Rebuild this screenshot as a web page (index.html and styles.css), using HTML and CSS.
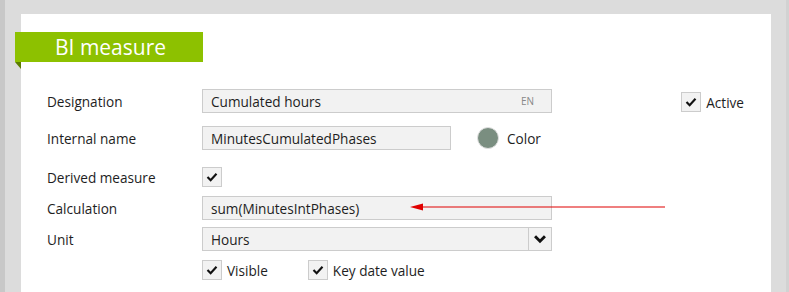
FILE: index.html
```html
<!DOCTYPE html>
<html lang="en">
<head>
    <meta charset="UTF-8">
    <title>BI measure</title>
    <link rel="stylesheet" href="styles.css">
</head>
<body>
    <main class="panel">
        <h1 class="banner">BI measure</h1>

        <form class="form">
            <div class="row r1">
                <label class="lbl">Designation</label>
                <div class="field wide">Cumulated hours <span class="lang">EN</span></div>
                <div class="active">
                    <span class="box"><svg viewBox="0 0 20 20"><polyline points="5,10 8.5,13.5 15,6.5"/></svg></span>
                    Active
                </div>
            </div>
            <div class="row r2">
                <label class="lbl">Internal name</label>
                <div class="field narrow">MinutesCumulatedPhases</div>
                <span class="swatch"></span>
                <span class="swatch-lbl">Color</span>
            </div>
            <div class="row r3">
                <label class="lbl">Derived measure</label>
                <span class="box"><svg viewBox="0 0 20 20"><polyline points="5,10 8.5,13.5 15,6.5"/></svg></span>
            </div>
            <div class="row r4">
                <label class="lbl">Calculation</label>
                <div class="field wide">sum(MinutesIntPhases)</div>
            </div>
            <div class="row r5">
                <label class="lbl">Unit</label>
                <div class="field wide select">Hours
                    <span class="caret"><svg viewBox="0 0 20 20"><polyline points="5.5,7.5 10,12 14.5,7.5"/></svg></span>
                </div>
            </div>
            <div class="row r6">
                <span class="lbl"></span>
                <span class="box"><svg viewBox="0 0 20 20"><polyline points="5,10 8.5,13.5 15,6.5"/></svg></span>
                <span class="chk-lbl">Visible</span>
                <span class="box key"><svg viewBox="0 0 20 20"><polyline points="5,10 8.5,13.5 15,6.5"/></svg></span>
                <span class="chk-lbl">Key date value</span>
            </div>
        </form>

        <!-- annotation arrow over the form -->
        <svg class="arrow" width="258" height="12" viewBox="0 0 258 12">
            <line x1="10" y1="6" x2="255" y2="6"/>
            <polygon points="0,6 13,2.5 13,9.5"/>
        </svg>
    </main>
</body>
</html>
```

FILE: styles.css
```css
body{
    margin: 0;
    height: 292px;
    overflow: hidden;
    background-color: #dcdcdc;
    border-left: 5px solid #c8c8c8;
    border-right: 3px solid #d2d2d2;
    font-family: "Open Sans", sans-serif;
    font-size: 13.6px;
    color: #1e1e1e;
    box-sizing: border-box;
}

.panel{
    position: relative;
    margin: 14px 0 0 16px;
    width: 750px;
    height: 290px;
    background-color: white;
    padding: 18px 0 0 0;
    box-sizing: border-box;
}

.banner{
    position: relative;
    margin: 0 0 0 -6px;
    width: 188px;
    height: 30px;
    background-color: #8dc100;
    color: white;
    font-weight: normal;
    font-size: 21px;
    line-height: 30px;
    padding-left: 40px;
    box-sizing: border-box;
}

.banner::after{
    content: "";
    position: absolute;
    left: 0;
    top: 30px;
    border-top: 7px solid #5c7d00;
    border-left: 6px solid transparent;
}

.form{
    padding: 27px 0 0 26px;
}

.row{
    display: flex;
    align-items: center;
    height: 24px;
}
.r2{ margin-top: 13px; }
.r3{ margin-top: 17px; height: 20px; }
.r4{ margin-top: 9px; }
.r5{ margin-top: 7px; }
.r6{ margin-top: 9px; height: 20px; }

.lbl{
    width: 155px;
    flex: none;
}

.field{
    height: 24px;
    background-color: #f2f2f2;
    border: 1px solid #cccccc;
    box-sizing: border-box;
    padding-left: 8px;
    display: flex;
    align-items: center;
}
.wide{ width: 350px; }
.narrow{ width: 249px; }

.lang{
    margin-left: auto;
    margin-right: 17px;
    font-size: 10px;
    color: #888;
}

.caret{
    margin-left: auto;
    width: 22px;
    height: 22px;
    border-left: 1px solid #cccccc;
}
.caret svg, .box svg{
    display: block;
    width: 100%;
    height: 100%;
}
.caret polyline{
    fill: none;
    stroke: #111;
    stroke-width: 2.6;
}

.box{
    width: 20px;
    height: 20px;
    flex: none;
    background-color: #f2f2f2;
    border: 1px solid #cccccc;
    box-sizing: border-box;
}
.box polyline{
    fill: none;
    stroke: #111;
    stroke-width: 2.4;
}

.active{
    margin-left: auto;
    margin-right: 27px;
    display: flex;
    align-items: center;
    gap: 5px;
    margin-top: 2px;
}

.swatch{
    width: 20px;
    height: 20px;
    border-radius: 50%;
    background-color: #7a8e80;
    border: 1px solid #e0e0e0;
    margin-left: 26px;
}
.swatch-lbl{
    margin-left: 8px;
}

.chk-lbl{
    margin-left: 5px;
}
.key{
    margin-left: 40px;
}

.arrow{
    position: absolute;
    left: 389px;
    top: 187px;
}
.arrow line{
    stroke: #e00000;
    stroke-width: 1.2;
}
.arrow polygon{
    fill: #e00000;
}
```
